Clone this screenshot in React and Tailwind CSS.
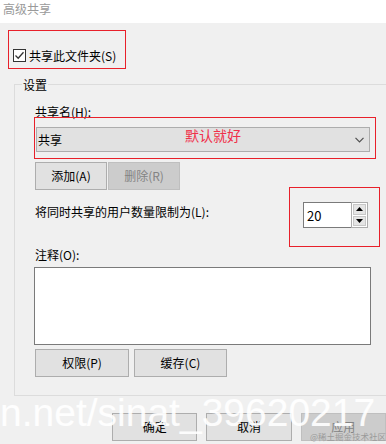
import React from "react";

const Btn = ({ children, className = "", disabled = false }) => (
  <div
    className={
      "flex items-center justify-center h-[28px] border text-[12px] leading-[12px] " +
      (disabled
        ? "bg-[#cccccc] border-[#bfbfbf] text-[#838383] "
        : "bg-[#e1e1e1] border-[#adadad] text-black ") +
      className
    }
  >
    {children}
  </div>
);

export default function App() {
  return (
    <div className="relative w-[386px] h-[444px] overflow-hidden bg-[#f0f0f0] font-['Noto_Sans_CJK_SC',sans-serif] text-black">
      {/* title bar */}
      <div className="h-[23px] bg-white pl-[3px] pt-[3px] text-[12px] leading-[12px] text-[#9a9a9a]">
        高级共享
      </div>

      {/* checkbox row */}
      <div className="mt-[26px] ml-[13px] flex items-center h-[13px]">
        <svg width="13" height="13" viewBox="0 0 13 13" className="shrink-0">
          <rect x="0.5" y="0.5" width="12" height="12" fill="#ffffff" stroke="#333333" />
          <path d="M2.5 6.5 L5.2 9.2 L10.5 3.2" fill="none" stroke="#333333" strokeWidth="1.3" />
        </svg>
        <span className="ml-[3px] text-[12px] leading-[12px] whitespace-nowrap">共享此文件夹(S)</span>
      </div>

      {/* group box */}
      <div className="relative mt-[22px] ml-[14px] w-[390px] h-[312px] border border-[#dcdcdc] pl-[19px]">
        <div className="absolute left-[7px] top-[-6px] bg-[#f0f0f0] px-[1px] text-[12px] leading-[12px]">
          设置
        </div>

        <div className="mt-[21px] ml-[1px] h-[12px] text-[12px] leading-[12px]">共享名(H):</div>

        <div className="mt-[9px] ml-[2px] w-[334px] h-[25px] bg-[#e1e1e1] border border-[#adadad] flex items-center pl-[1px] pr-[5px]">
          <span className="text-[12px] leading-[12px]">共享</span>
          <svg width="9" height="6" viewBox="0 0 9 6" className="ml-auto">
            <path d="M0.5 0.8 L4.5 4.8 L8.5 0.8" fill="none" stroke="#505050" strokeWidth="1.2" />
          </svg>
        </div>

        <div className="mt-[10px] ml-[1px] flex gap-[1px]">
          <Btn className="w-[72px]">添加(A)</Btn>
          <Btn className="w-[72px]" disabled>删除(R)</Btn>
        </div>

        <div className="mt-[12px] w-[334px] flex items-start">
          <div className="mt-[4px] ml-[1px] text-[12px] leading-[12px] whitespace-nowrap">
            将同时共享的用户数量限制为(L):
          </div>
          <div className="ml-auto flex w-[65px] h-[26px]">
            <div className="flex-1 bg-white border border-[#7a7a7a] border-r-0 flex items-center pl-[3px] text-[13px] leading-[13px]">
              20
            </div>
            <div className="w-[17px] h-[26px] border border-[#adadad] bg-white flex flex-col p-[1px] gap-[1px]">
              <div className="flex-1 bg-[#e5e5e5] border border-[#c8c8c8] flex items-center justify-center">
                <svg width="7" height="4" viewBox="0 0 7 4">
                  <path d="M0 4 L3.5 0 L7 4 Z" fill="#000" />
                </svg>
              </div>
              <div className="flex-1 bg-[#e5e5e5] border border-[#c8c8c8] flex items-center justify-center">
                <svg width="7" height="4" viewBox="0 0 7 4">
                  <path d="M0 0 L3.5 4 L7 0 Z" fill="#000" />
                </svg>
              </div>
            </div>
          </div>
        </div>

        <div className="mt-[21px] ml-[1px] h-[12px] text-[12px] leading-[12px]">注释(O):</div>

        <div className="mt-[6px] w-[337px] h-[78px] bg-white border border-[#7a7a7a]"></div>

        <div className="mt-[4px] ml-[1px] flex gap-[5px]">
          <Btn className="w-[94px]">权限(P)</Btn>
          <Btn className="w-[93px]">缓存(C)</Btn>
        </div>
      </div>

      {/* bottom buttons */}
      <div className="mt-[17px] ml-[112px] flex gap-[9px]">
        <Btn className="w-[86px]">确定</Btn>
        <Btn className="w-[86px]">取消</Btn>
        <Btn className="w-[86px]" disabled>应用</Btn>
      </div>

      {/* annotations */}
      <div className="absolute left-[8px] top-[30px] w-[118px] h-[39px] border border-[#e8202a]"></div>
      <div className="absolute left-[34px] top-[117px] w-[342px] h-[42px] border border-[#e8202a]"></div>
      <div className="absolute left-[289px] top-[187px] w-[91px] h-[60px] border border-[#e8202a]"></div>
      <div className="absolute left-[185px] top-[127px] text-[14px] leading-[16px] text-[#f0304a] whitespace-nowrap">
        默认就好
      </div>

      {/* watermarks */}
      <div className="absolute left-[0px] top-[393px] font-['Liberation_Sans',Arial,sans-serif] text-[39px] leading-[39px] text-white/90 whitespace-nowrap">
        n.net/sinat_39620217
      </div>
      <div className="absolute left-[310px] top-[431px] text-[8.5px] leading-[10px] text-[#9a9a9a] whitespace-nowrap">
        @稀土掘金技术社区
      </div>
    </div>
  );
}
